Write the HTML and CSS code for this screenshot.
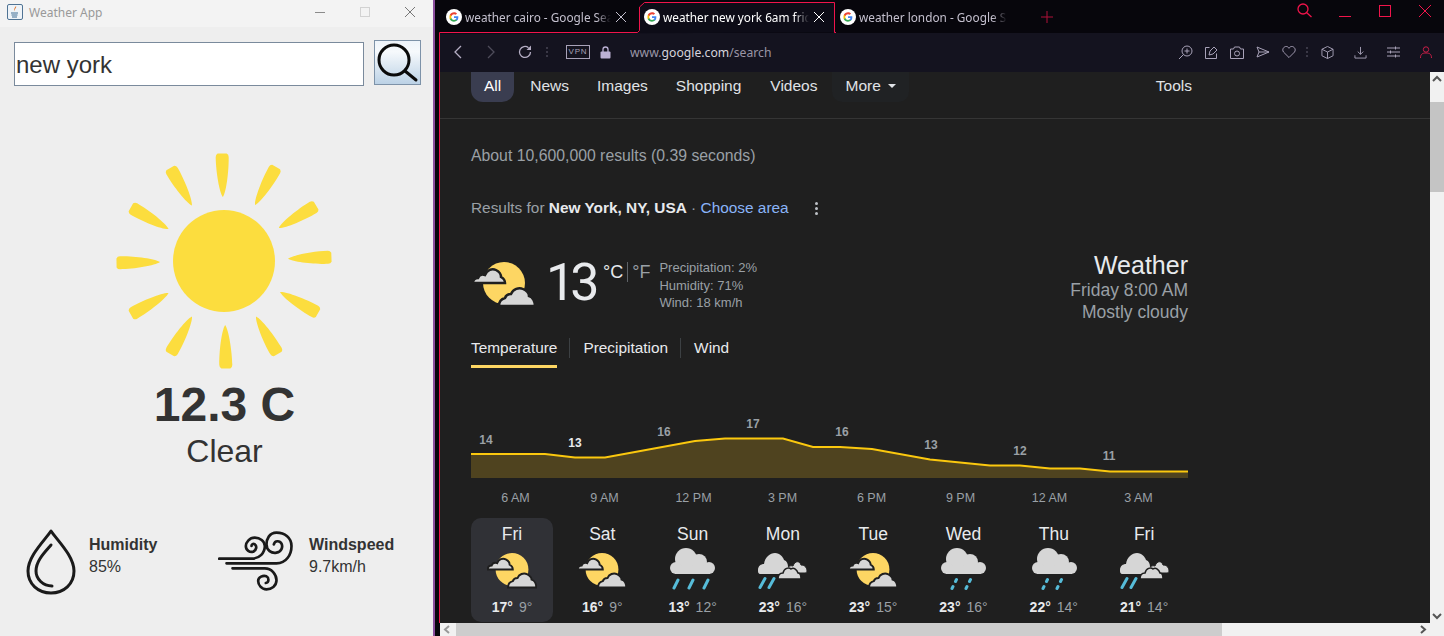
FILE: index.html
```html
<!DOCTYPE html>
<html lang="en">
<head>
  <meta charset="UTF-8" />
  <title>Weather App</title>
  <link rel="stylesheet" href="styles.css">
</head>
<body>
  <svg class="defs" width="0" height="0">
    <symbol id="g-logo" viewBox="0 0 24 24">
      <circle cx="12" cy="12" r="12" fill="#fff"/>
      <path d="M18.500 12.300c0-.5 0-1-.1-1.400H12v2.700h3.700c-.2.9-.6 1.600-1.300 2.100v1.700h2.200c1.200-1.200 1.900-2.900 1.900-5.100z" fill="#4285f4"/>
      <path d="M12 19c1.800 0 3.400-.6 4.600-1.600l-2.200-1.700c-.6.4-1.400.7-2.400.7-1.800 0-3.300-1.200-3.900-2.900H5.800v1.800C6.900 17.500 9.300 19 12 19z" fill="#34a853"/>
      <path d="M8.100 13.500c-.3-.9-.3-2 0-2.900V8.800H5.800c-.8 1.500-.8 4.900 0 6.500z" fill="#fbbc05"/>
      <path d="M12 7.700c1 0 1.900.4 2.600 1l2-2C15.400 5.700 13.800 5 12 5 9.300 5 6.900 6.500 5.800 8.800l2.300 1.800C8.700 8.900 10.200 7.700 12 7.700z" fill="#ea4335"/>
    </symbol>
    <symbol id="cloud-part" viewBox="0 0 64 46">
      <circle cx="32" cy="21" r="21" fill="#fdd663"/>
      <path d="M1 21C1 18 3 16 6 16C7 13 10 12 13 13C15 8 20 6 24 8C28 10 29 13 29 15C31 16 33 18 33 21z" fill="#d6d6d6" stroke="#1f1f1f" stroke-width="2.500"/>
      <path d="M27 44C27 40 29 37 33 36C34 33 37 32 39 32C41 27 47 25 51 27C55 29 57 32 57 34C61 35 63 40 63 44z" fill="#d6d6d6" stroke="#1f1f1f" stroke-width="2.500"/>
    </symbol>
    <symbol id="cloud-rain" viewBox="0 0 46 42">
      <g fill="#d6d6d6">
        <circle cx="16" cy="11" r="11"/>
        <circle cx="29" cy="14" r="8"/>
        <circle cx="39" cy="20" r="6"/>
        <circle cx="6" cy="20" r="6"/>
      </g>
      <path d="M5 26V18H40V26z" fill="#d6d6d6"/>
      <path d="M4 40l4-8M19 40l4-8M34 40l4-8" stroke="#56bcd9" stroke-width="3" stroke-linecap="round" fill="none"/>
    </symbol>
    <symbol id="cloud-drizzle" viewBox="0 0 46 42">
      <g fill="#d6d6d6">
        <circle cx="17" cy="11" r="11"/>
        <circle cx="30" cy="14" r="8"/>
        <circle cx="40" cy="20" r="6"/>
        <circle cx="7" cy="20" r="6"/>
      </g>
      <path d="M6 26V18H41V26z" fill="#d6d6d6"/>
      <path d="M12 40.500l1-2M15.500 33.500l1-2M26 40.500l1-2M29.500 33.500l1-2" stroke="#56bcd9" stroke-width="3" stroke-linecap="round" fill="none"/>
    </symbol>
    <symbol id="cloud-mixed" viewBox="0 0 49 36">
      <g fill="#d6d6d6" stroke="#1f1f1f" stroke-width="1">
        <path d="M27 20C28 14 32 12 35 13C37 7 42 8 43 12C47 12 49 15 49 18C49 19 48 20 47 20z"/>
      </g>
      <path d="M3 21C0 21 0 19 0 17C0 13 3 11 6 11C7 4 12 0 17 0C22 0 25 4 26 7C29 8 30 11 30 14C30 18 30 21 27 21z" fill="#d6d6d6"/>
      <path d="M20 26C20 22 22 20 25 20C26 15 31 14 33 16C36 14 39 17 40 20C42 20 43 23 43 26z" fill="#d6d6d6" stroke="#1f1f1f" stroke-width="1.500"/>
      <path d="M2 34.500l5-9M11 34.500l5-9" stroke="#56bcd9" stroke-width="3" stroke-linecap="round" fill="none"/>
    </symbol>
    <path id="ray" d="M-4.500 -107.500h9q2 1 2 3.500C6.500 -90 3.500 -69 0 -64C-3.500 -69 -6.500 -90 -6.500 -104q0-2.500 2-3.500z"/>
  </svg>

  <div class="desktop">
    <div class="app-window">
      <div class="app-title">
        <svg class="java-icon" width="16" height="16" viewBox="0 0 16 16">
          <rect x=".5" y=".5" width="15" height="15" rx="1.500" fill="#eef3f8" stroke="#4f7394"/>
          <path d="M9 2C10 4 7 5 7.500 7.500C6.500 6 7 4.500 9 2z" fill="#e2762a"/>
          <path d="M4 9h7M4.500 11h6M5 13h5" stroke="#3e6f96" stroke-width="1"/>
        </svg>
        <span class="app-name">Weather App</span>
        <div class="app-controls">
          <svg width="12" height="12" viewBox="0 0 12 12"><path d="M1 6.500h10" stroke="#8a8a8a"/></svg>
          <svg width="12" height="12" viewBox="0 0 12 12"><rect x="1.500" y="1.500" width="9" height="9" fill="none" stroke="#d2d2d2"/></svg>
          <svg width="12" height="12" viewBox="0 0 12 12"><path d="M1 1l10 10M11 1L1 11" stroke="#777" fill="none"/></svg>
        </div>
      </div>

      <div class="search-row">
        <div class="search-input">new york</div>
        <div class="search-btn">
          <svg width="45" height="43" viewBox="0 0 45 43">
            <circle cx="19" cy="19" r="15" fill="none" stroke="#0a0a0a" stroke-width="3"/>
            <path d="M30 30l11 9" stroke="#0a0a0a" stroke-width="3" stroke-linecap="round"/>
          </svg>
        </div>
      </div>

      <svg class="sun" width="220" height="220" viewBox="-110 -110 220 220">
        <circle cx="0" cy="0" r="51" fill="#fcdd3e"/>
        <g fill="#fcdd3e">
          <use href="#ray" transform="rotate(-1)"/>
          <use href="#ray" transform="rotate(29)"/>
          <use href="#ray" transform="rotate(59)"/>
          <use href="#ray" transform="rotate(88)"/>
          <use href="#ray" transform="rotate(119)"/>
          <use href="#ray" transform="rotate(150)"/>
          <use href="#ray" transform="rotate(179)"/>
          <use href="#ray" transform="rotate(210)"/>
          <use href="#ray" transform="rotate(240)"/>
          <use href="#ray" transform="rotate(269)"/>
          <use href="#ray" transform="rotate(300)"/>
          <use href="#ray" transform="rotate(330)"/>
        </g>
      </svg>

      <div class="temp">12.3 C</div>
      <div class="desc">Clear</div>

      <div class="stats">
        <div class="stat stat-hum">
          <svg width="50" height="66" viewBox="0 0 50 66">
            <path d="M25 2C19 11 2 27 2 42C2 55 12 64 25 64C38 64 48 55 48 42C48 27 31 11 25 2z" fill="none" stroke="#1a1a1a" stroke-width="3" stroke-linejoin="round"/>
            <path d="M25 16C18 24 10 32 10 42C10 50 17 57 26 57" fill="none" stroke="#1a1a1a" stroke-width="3" stroke-linecap="round"/>
          </svg>
          <div>
            <div class="stat-label">Humidity</div>
            <div class="stat-value">85%</div>
          </div>
        </div>
        <div class="stat stat-wind">
          <svg width="77" height="60" viewBox="655 60 230 180">
            <g fill="none" stroke="#1a1a1a" stroke-width="8" stroke-linecap="round">
              <path d="M680 157H830C860 157 875 130 875 105C875 80 855 65 830 65C808 65 800 85 800 100C800 118 815 128 830 125C845 122 850 108 845 98C840 88 825 88 822 100"/>
              <path d="M658 143H755C780 143 795 125 795 105C795 90 780 80 765 80C748 80 738 95 738 105C738 118 750 125 760 122C770 118 772 105 765 100C760 97 755 100 755 105"/>
              <path d="M698 172H795C815 172 830 190 830 208C830 225 815 235 800 235C785 235 775 222 775 210C775 198 790 192 800 196C808 200 808 215 798 216"/>
            </g>
          </svg>
          <div>
            <div class="stat-label">Windspeed</div>
            <div class="stat-value">9.7km/h</div>
          </div>
        </div>
      </div>
    </div>
    <div class="desktop-edge"></div>

    <div class="browser">
      <div class="tabstrip">
        <svg class="tab-outline" width="1008" height="34" viewBox="0 0 1008 34">
          <defs>
            <linearGradient id="fade" x1="0" x2="1" y1="0" y2="0">
              <stop offset="0" stop-color="#f0144b"/>
              <stop offset="1" stop-color="#f0144b" stop-opacity="0"/>
            </linearGradient>
          </defs>
          <path d="M3.500 34V32.500H201.500L203.500 30.500V7L208.500 2.500H398.500V32.500H400" fill="#0d0c17" stroke="#f0144b"/>
          <path d="M399 32.500H684" fill="none" stroke="url(#fade)"/>
        </svg>
        <div class="tab">
          <svg width="16" height="16"><use href="#g-logo"/></svg>
          <span class="tab-text">weather cairo - Google Sea</span>
          <svg class="tab-x" width="10" height="10" viewBox="0 0 10 10"><path d="M0 0l10 10M10 0L0 10" stroke="#c4c0ce"/></svg>
        </div>
        <div class="tab tab-active">
          <svg width="16" height="16"><use href="#g-logo"/></svg>
          <span class="tab-text">weather new york 6am frid</span>
          <svg class="tab-x" width="10" height="10" viewBox="0 0 10 10"><path d="M0 0l10 10M10 0L0 10" stroke="#fff"/></svg>
        </div>
        <div class="tab tab-last">
          <svg width="16" height="16"><use href="#g-logo"/></svg>
          <span class="tab-text">weather london - Google S</span>
        </div>
        <svg class="tab-plus" width="12" height="12" viewBox="0 0 12 12"><path d="M6 0v12M0 6h12" stroke="#b01038"/></svg>
        <div class="win-controls">
          <svg width="15" height="15" viewBox="0 0 15 15"><circle cx="6" cy="6" r="5" fill="none" stroke="#f0144b" stroke-width="1.300"/><path d="M9.500 9.500l5 4.500" stroke="#f0144b" stroke-width="1.300"/></svg>
          <svg width="12" height="12" viewBox="0 0 12 12"><path d="M0 11.500h12" stroke="#f0144b"/></svg>
          <svg width="12" height="12" viewBox="0 0 12 12"><rect x=".5" y=".5" width="11" height="11" fill="none" stroke="#f0144b"/></svg>
          <svg width="12" height="12" viewBox="0 0 12 12"><path d="M0 0l12 12M12 0L0 12" stroke="#f0144b"/></svg>
        </div>
      </div>

      <div class="toolbar">
        <svg class="tb-back" width="8" height="14" viewBox="0 0 8 14"><path d="M7 1L1 7l6 6" fill="none" stroke="#b5aec4" stroke-width="1.300"/></svg>
        <svg class="tb-fwd" width="8" height="14" viewBox="0 0 8 14"><path d="M1 1l6 6l-6 6" fill="none" stroke="#4e4c5a" stroke-width="1.300"/></svg>
        <svg class="tb-reload" width="14" height="14" viewBox="0 0 14 14"><path d="M12.500 7A5.500 5.500 0 1 1 10.500 2.700" fill="none" stroke="#b5aec4" stroke-width="1.300"/><path d="M8.500 5H13V.5z" fill="#b5aec4"/></svg>
        <span class="tb-sep"></span>
        <span class="vpn">VPN</span>
        <svg class="tb-lock" width="11" height="13" viewBox="0 0 11 13"><path d="M3 6V3.500a2.500 2.500 0 0 1 5 0V6" fill="none" stroke="#bcb1d4" stroke-width="1.300"/><rect x=".5" y="5.500" width="10" height="7" rx="1" fill="#bcb1d4"/></svg>
        <div class="url"><span class="url-dim">www.</span>google.com<span class="url-dim">/search</span></div>
        <div class="tb-icons">
          <svg width="15" height="15" viewBox="0 0 15 15"><circle cx="9" cy="6" r="5" fill="none" stroke="#a8a2b8"/><path d="M5.500 9.500L1 14M9 3.500v5M6.500 6h5" fill="none" stroke="#a8a2b8"/></svg>
          <svg width="13" height="13" viewBox="0 0 13 13"><path d="M4.500 1.500H.5v11h11V7.500M4 9l1-4l4-4l3 3l-4 4z" fill="none" stroke="#a8a2b8"/></svg>
          <svg width="14" height="13" viewBox="0 0 14 13"><path d="M.5 3h3l1-2h5l1 2h3v9.500H.5z" fill="none" stroke="#a8a2b8" stroke-linejoin="round"/><circle cx="7" cy="7.500" r="2.500" fill="none" stroke="#a8a2b8"/></svg>
          <svg width="14" height="12" viewBox="0 0 14 12"><path d="M1 1l12 5l-12 5l2-5zM3 6h10" fill="none" stroke="#a8a2b8"/></svg>
          <svg width="14" height="12" viewBox="0 0 15 13"><path d="M7.500 12.500L1.500 6.500C-.5 3.500 2 .5 4.500 .5C6 .5 7 1.500 7.500 2.500C8 1.500 9 .5 10.500 .5C13 .5 15.500 3.500 13.500 6.500z" fill="none" stroke="#a8a2b8"/></svg>
          <span class="tb-sep tb-sep-right"></span>
          <svg width="13" height="13" viewBox="0 0 14 14"><path d="M7 .5l6 3v7l-6 3l-6-3v-7zM1 3.500l6 3l6-3M7 6.500v7" fill="none" stroke="#a8a2b8"/></svg>
          <svg class="tb-wide" width="13" height="13" viewBox="0 0 14 14"><path d="M7 1v8M4 6l3 3l3-3M1 10v3h12v-3" fill="none" stroke="#a8a2b8"/></svg>
          <svg class="tb-wide" width="13" height="12" viewBox="0 0 13 12"><path d="M0 2h13M0 6h13M0 10h13M8.500 .5v3M3.500 4.500v3M8.500 8.500v3" fill="none" stroke="#a8a2b8"/></svg>
          <svg class="tb-wide" width="12" height="12" viewBox="0 0 12 12"><circle cx="6" cy="3.500" r="2.700" fill="none" stroke="#c81e48"/><path d="M.5 12c0-4 2-5 5.500-5s5.500 1 5.500 5" fill="none" stroke="#c81e48"/></svg>
        </div>
      </div>

      <div class="viewport">
        <div class="page">
          <nav class="g-nav">
            <span class="g-link g-all">All</span>
            <span class="g-link">News</span>
            <span class="g-link">Images</span>
            <span class="g-link">Shopping</span>
            <span class="g-link g-videos">Videos</span>
            <span class="g-link g-more">More <i class="caret"></i></span>
            <span class="g-link g-tools">Tools</span>
          </nav>
          <div class="g-rule"></div>
          <div class="g-body">
            <div class="g-count">About 10,600,000 results (0.39 seconds)</div>
            <div class="g-loc">
              <span>Results for <b>New York, NY, USA</b> · <span class="g-blue">Choose area</span></span>
              <span class="g-dots"><i></i><i></i><i></i></span>
            </div>

            <div class="wx-head">
              <svg class="wx-big" width="64" height="46"><use href="#cloud-part"/></svg>
              <div class="wx-temp">13</div>
              <div class="wx-units"><span class="unit-c">°C</span><span class="unit-f">°F</span></div>
              <div class="wx-details">
                <div>Precipitation: 2%</div>
                <div>Humidity: 71%</div>
                <div>Wind: 18 km/h</div>
              </div>
              <div class="wx-side">
                <div class="wx-title">Weather</div>
                <div class="wx-sub">Friday 8:00 AM</div>
                <div class="wx-sub">Mostly cloudy</div>
              </div>
            </div>

            <div class="wx-tabs">
              <span class="wx-tab wx-tab-on">Temperature</span>
              <span class="wx-tab">Precipitation</span>
              <span class="wx-tab">Wind</span>
            </div>

            <svg class="chart" width="717" height="70" viewBox="471 410 717 70">
              <path d="M471 454H545L575 457.500H605L695 441L725 438.500H783L813 447H840L872 449L930 459.500L990 465.500H1020L1050 468.500H1080L1110 471.500H1188V478H471z" fill="#4f431f"/>
              <path d="M471 454H545L575 457.500H605L695 441L725 438.500H783L813 447H840L872 449L930 459.500L990 465.500H1020L1050 468.500H1080L1110 471.500H1188" fill="none" stroke="#fbc80e" stroke-width="2"/>
              <g class="chart-label">
                <text x="486" y="444">14</text>
                <text x="575" y="447" class="chart-now">13</text>
                <text x="664" y="436">16</text>
                <text x="753" y="428">17</text>
                <text x="842" y="436">16</text>
                <text x="931" y="449">13</text>
                <text x="1020" y="455">12</text>
                <text x="1109" y="460">11</text>
              </g>
            </svg>

            <div class="hours">
              <span>6 AM</span><span>9 AM</span><span>12 PM</span><span>3 PM</span>
              <span>6 PM</span><span>9 PM</span><span>12 AM</span><span>3 AM</span>
            </div>

            <div class="days">
              <div class="day day-on">
                <div class="day-name">Fri</div>
                <svg class="day-icon icon-low" width="50" height="36"><use href="#cloud-part"/></svg>
                <div class="day-temps"><b>17°</b><span>9°</span></div>
              </div>
              <div class="day">
                <div class="day-name">Sat</div>
                <svg class="day-icon icon-low" width="50" height="36"><use href="#cloud-part"/></svg>
                <div class="day-temps"><b>16°</b><span>9°</span></div>
              </div>
              <div class="day">
                <div class="day-name">Sun</div>
                <svg class="day-icon" width="46" height="42"><use href="#cloud-rain"/></svg>
                <div class="day-temps"><b>13°</b><span>12°</span></div>
              </div>
              <div class="day">
                <div class="day-name">Mon</div>
                <svg class="day-icon icon-low" width="49" height="36"><use href="#cloud-mixed"/></svg>
                <div class="day-temps"><b>23°</b><span>16°</span></div>
              </div>
              <div class="day">
                <div class="day-name">Tue</div>
                <svg class="day-icon icon-low" width="50" height="36"><use href="#cloud-part"/></svg>
                <div class="day-temps"><b>23°</b><span>15°</span></div>
              </div>
              <div class="day">
                <div class="day-name">Wed</div>
                <svg class="day-icon" width="46" height="42"><use href="#cloud-drizzle"/></svg>
                <div class="day-temps"><b>23°</b><span>16°</span></div>
              </div>
              <div class="day">
                <div class="day-name">Thu</div>
                <svg class="day-icon" width="46" height="42"><use href="#cloud-drizzle"/></svg>
                <div class="day-temps"><b>22°</b><span>14°</span></div>
              </div>
              <div class="day">
                <div class="day-name">Fri</div>
                <svg class="day-icon icon-low" width="49" height="36"><use href="#cloud-mixed"/></svg>
                <div class="day-temps"><b>21°</b><span>14°</span></div>
              </div>
            </div>
          </div>
        </div>
        <div class="vscroll">
          <svg width="14" height="14" viewBox="0 0 14 14"><path d="M3 9l4-4l4 4" fill="none" stroke="#555" stroke-width="2"/></svg>
          <div class="vthumb"></div>
          <svg class="vdown" width="14" height="14" viewBox="0 0 14 14"><path d="M3 5l4 4l4-4" fill="none" stroke="#555" stroke-width="2"/></svg>
        </div>
      </div>
      <div class="hscroll">
        <svg width="14" height="13" viewBox="0 0 14 13"><path d="M9 3L5 6.500l4 3.500" fill="none" stroke="#999" stroke-width="2"/></svg>
        <div class="hthumb"></div>
        <svg class="hright" width="14" height="13" viewBox="0 0 14 13"><path d="M5 3l4 3.500L5 10" fill="none" stroke="#555" stroke-width="2"/></svg>
      </div>
    </div>
  </div>
</body>
</html>
```

FILE: styles.css
```css
* { box-sizing: border-box; }
html, body { margin: 0; padding: 0; height: 100%; overflow: hidden; }
body { background: #07050c; font-family: "Liberation Sans", Arial, sans-serif; }
.defs { position: absolute; }
.desktop { display: flex; width: 1444px; height: 636px; }

/* left: java weather window */
.app-window {
  width: 433px;
  height: 636px;
  background: #eeeeee;
  color: #333;
  display: flex;
  flex-direction: column;
  align-items: center;
  flex-shrink: 0;
}
.desktop-edge { width: 2px; height: 636px; margin-right: 1px; background: #8b4f9e; flex-shrink: 0; }
.app-title {
  width: 100%;
  height: 27px;
  background: #f3f3f3;
  display: flex;
  align-items: center;
  padding: 0 17px 3px 7px;
  font: 12px "Noto Sans", sans-serif;
  color: #999;
}
.app-name { margin-left: 6px; }
.java-icon { flex-shrink: 0; }
.app-controls { margin-left: auto; display: flex; gap: 33px; }
.search-row {
  width: 100%;
  display: flex;
  align-items: flex-start;
  padding: 13px 12px 0 14px;
  gap: 10px;
}
.search-input {
  margin-top: 2px;
  width: 350px;
  height: 44px;
  background: #fff;
  border: 1px solid #7a8a9c;
  padding-left: 1px;
  font-size: 24px;
  line-height: 44px;
  color: #333;
}
.search-btn {
  width: 47px;
  height: 45px;
  border: 1px solid #7d92a8;
  background: linear-gradient(#eef4fa, #f6f9fc 25%, #bcd2e6);
}
.search-btn svg { display: block; }
.sun { margin-top: 65px; display: block; margin-left: 15px; }
.temp { margin-top: 6px; margin-left: 16px; font-size: 48px; font-weight: bold; line-height: 55px; }
.desc { margin-left: 16px; font-size: 32px; line-height: 38px; }
.stats { width: 100%; display: flex; margin-top: 59px; padding-left: 26px; }
.stat { display: flex; align-items: flex-start; }
.stat-hum { width: 192px; gap: 13px; }
.stat-wind { gap: 14px; margin-top: 2px; }
.stat-label { font-size: 16px; font-weight: bold; line-height: 22px; margin-top: 5px; }
.stat-value { font-size: 16px; line-height: 21px; }
.stat-wind .stat-label { margin-top: 3px; }

/* right: browser */
.browser {
  flex: 1;
  display: flex;
  flex-direction: column;
  min-width: 0;
  background: #07060c;
  border-left: 3px solid transparent;
  position: relative;
}
.tabstrip {
  height: 33px;
  display: flex;
  align-items: center;
  padding-left: 7px;
  color: #c4c0ce;
  font: 11.800px "Noto Sans", sans-serif;
  position: relative;
  flex-shrink: 0;
}
.tab-outline { position: absolute; left: -3px; top: 0; }
.tab { width: 194px; display: flex; align-items: center; gap: 3px; height: 100%; position: relative; }
.tab-active { color: #fff; width: 198px; padding-left: 4px; }
.tab-last { width: 180px; padding-left: 2px; }
.tab-text { width: 146px; white-space: nowrap; -webkit-mask-image: linear-gradient(90deg, #000 90%, transparent); }
.tab-last .tab-text { width: 148px; }
.tab-x { margin-left: 2px; }
.tab-plus { margin-left: 23px; }
.win-controls { margin-left: auto; margin-bottom: 12px; display: flex; align-items: center; padding-right: 13px; }
.win-controls svg:nth-child(1) { margin-right: 27px; }
.win-controls svg:nth-child(2) { margin-right: 28px; }
.win-controls svg:nth-child(3) { margin-right: 28px; }

.toolbar {
  height: 39px;
  background: #14131f;
  border-left: 1px solid #f0144b;
  display: flex;
  align-items: center;
  padding: 0 0 1px 14px;
  flex-shrink: 0;
}
.tb-fwd { margin-left: 25px; }
.tb-reload { margin-left: 23px; }
.tb-sep { width: 2px; height: 10px; margin-left: 14px; background: repeating-linear-gradient(#3a3846 0 2px, transparent 2px 4px); }
.vpn {
  margin-left: 18px;
  width: 24px;
  height: 14px;
  border: 1px solid #a8a2b8;
  color: #a8a2b8;
  font: 8px/12px "Liberation Sans", sans-serif;
  letter-spacing: .8px;
  text-align: center;
}
.tb-lock { margin-left: 10px; }
.url { margin-left: 19px; font: 12.200px "Noto Sans", sans-serif; color: #d7d4dd; }
.url-dim { color: #9a96a6; }
.tb-icons { margin-left: auto; display: flex; align-items: center; gap: 12px; padding-right: 12px; }
.tb-sep-right { margin-left: -2px; margin-right: 1px; }
.tb-wide { margin-left: 8px; }

.viewport { flex: 1; display: flex; min-height: 0; border-left: 1px solid #f0144b; background: #1f1f1f; }
.page { flex: 1; min-width: 0; color: #e8eaed; overflow: hidden; }
.g-nav { display: flex; align-items: flex-start; height: 30px; margin-left: 31px; width: 717px; font-size: 15.500px; }
.g-link { margin-right: 28px; color: #e0e3e7; white-space: nowrap; height: 30px; line-height: 28px; }
.g-all { background: #3a3d50; color: #fff; padding: 0 13px; margin-right: 16px; border-radius: 0 0 12px 12px; }
.g-videos { margin-left: 1px; }
.g-more { background: #202224; padding: 0 13px; margin-left: -13px; border-radius: 0 0 10px 10px; margin-right: 0; }
.caret { display: inline-block; border: 4px solid transparent; border-top-color: #e0e3e7; border-bottom: 0; margin-left: 3px; vertical-align: 3px; }
.g-tools { margin-left: auto; margin-right: -4px; }
.g-rule { height: 1px; background: #353535; margin-top: 16px; }
.g-body { width: 717px; margin-left: 31px; }
.g-count { margin-top: 28px; font-size: 15.800px; line-height: 17px; color: #9aa0a6; white-space: nowrap; }
.g-loc { margin-top: 35px; height: 18px; font-size: 15.400px; line-height: 18px; color: #9aa0a6; white-space: nowrap; display: flex; align-items: center; }
.g-loc b { color: #e8eaed; }
.g-blue { color: #8ab4f8; }
.g-dots { display: flex; flex-direction: column; gap: 2px; margin-left: 26px; }
.g-dots i { width: 3px; height: 3px; border-radius: 50%; background: #bdc1c6; }
.wx-head { display: flex; margin-top: 45px; height: 65px; }
.wx-big { margin-left: 1px; flex-shrink: 0; }
.wx-temp { font: 400 52px/48px Roboto, sans-serif; letter-spacing: -5px; color: #e8eaed; margin: -3px 9px 0 10px; width: 48px; }
.wx-units { font-size: 18px; line-height: 20px; display: flex; height: 20px; }
.unit-c { color: #e8eaed; padding-right: 4px; border-right: 1px solid #5f6368; }
.unit-f { color: #9aa0a6; padding-left: 4px; }
.wx-details { margin: -3px 0 0 9px; font-size: 13px; line-height: 17.500px; color: #9aa0a6; }
.wx-side { margin-left: auto; text-align: right; }
.wx-title { font-size: 25px; line-height: 28px; color: #e8eaed; margin-top: -11px; }
.wx-sub { font-size: 17.500px; line-height: 22px; color: #9aa0a6; }
.wx-tabs { display: flex; margin-top: 9px; height: 33px; font-size: 15.400px; }
.wx-tab { padding: 0 12px 0 13px; height: 20px; line-height: 20px; border-left: 1px solid #3c4043; color: #e8eaed; position: relative; margin-top: 2px; }
.wx-tab:first-child { padding-left: 0; border-left: 0; }
.wx-tab-on::after { content: ""; position: absolute; left: 0; right: 12px; top: 27px; height: 3px; background: #fdd663; }
.chart { display: block; margin-top: 41px; }
.chart-label { font: bold 12px "Liberation Sans", sans-serif; fill: #9aa0a6; text-anchor: middle; }
.chart-now { fill: #e8eaed; }
.hours { display: grid; grid-template-columns: repeat(8, 89px); margin-top: 8px; font-size: 12.500px; line-height: 20px; color: #9aa0a6; text-align: center; }
.days { display: grid; grid-template-columns: repeat(8, 90.300px); margin-top: 10px; }
.day { width: 82px; height: 104px; border-radius: 10px; display: flex; flex-direction: column; align-items: center; position: relative; }
.day-on { background: #303136; }
.day-name { font-size: 17.500px; line-height: 20px; margin-top: 6px; color: #e8eaed; }
.day-icon { position: absolute; top: 30px; }
.icon-low { top: 35px; }
.day-temps { position: absolute; top: 81px; font-size: 14px; line-height: 17px; display: flex; gap: 6px; color: #9aa0a6; }
.day-temps b { color: #e8eaed; }

.vscroll { width: 14px; background: #f1f1f1; display: flex; flex-direction: column; flex-shrink: 0; }
.vthumb { height: 90px; margin-top: 16px; background: #c4c4c4; }
.vdown { margin-top: auto; }
.hscroll { height: 13px; background: #f1f1f1; display: flex; flex-shrink: 0; margin-left: 1px; }
.hthumb { width: 766px; margin-left: 2px; background: #cdcdcd; }
.hright { margin-left: auto; margin-right: 14px; }
```
